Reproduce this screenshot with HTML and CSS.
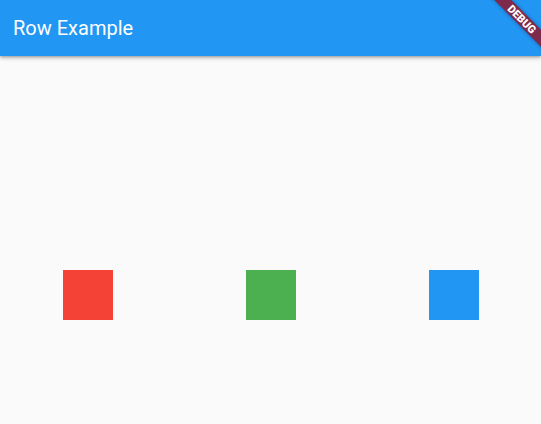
FILE: index.html
```html
<!DOCTYPE html>
<html>
<head>
<meta charset="utf-8">
<link rel="stylesheet" href="styles.css">
</head>
<body>
<div class="app">
  <header class="appbar">
    <h1 class="title">Row Example</h1>
  </header>
  <main class="body">
    <div class="row">
      <div class="box red"></div>
      <div class="box green"></div>
      <div class="box blue"></div>
    </div>
  </main>
  <div class="banner"><span>DEBUG</span></div>
</div>
</body>
</html>
```
FILE: styles.css
```css
html, body {
  margin: 0;
  padding: 0;
  width: 541px;
  height: 424px;
  overflow: hidden;
  background: #fafafa;
  font-family: Roboto, "Noto Sans", sans-serif;
}
.app {
  position: relative;
  width: 541px;
  height: 424px;
  overflow: hidden;
  display: flex;
  flex-direction: column;
}
.appbar {
  height: 56px;
  flex: none;
  background: #2196f3;
  box-shadow: 0 2px 4px rgba(0,0,0,0.25), 0 1px 2px rgba(0,0,0,0.15);
  display: flex;
  align-items: center;
  padding-left: 13px;
  position: relative;
  z-index: 1;
}
.title {
  margin: 0;
  color: #fff;
  font-size: 20px;
  font-weight: 400;
  line-height: 1;
}
.body {
  flex: 1;
  padding-top: 214px;
}
.row {
  display: flex;
  padding-left: 63px;
  gap: 133px;
}
.box {
  width: 50px;
  height: 50px;
}
.red { background: #f44336; }
.green { background: #4caf50; }
.blue { background: #2196f3; }
.banner {
  position: absolute;
  left: calc(100% - 40px);
  top: 21px;
  width: 80px;
  height: 12px;
  transform-origin: 40px -21px;
  transform: rotate(45deg);
  background: #7d2a4c;
  box-shadow: 0 0 4px rgba(0,0,0,0.35);
  display: flex;
  align-items: center;
  justify-content: center;
  z-index: 2;
}
.banner span {
  color: #fff;
  font-size: 11px;
  font-weight: 900;
  line-height: 1;
  font-family: Roboto, sans-serif;
}
```
